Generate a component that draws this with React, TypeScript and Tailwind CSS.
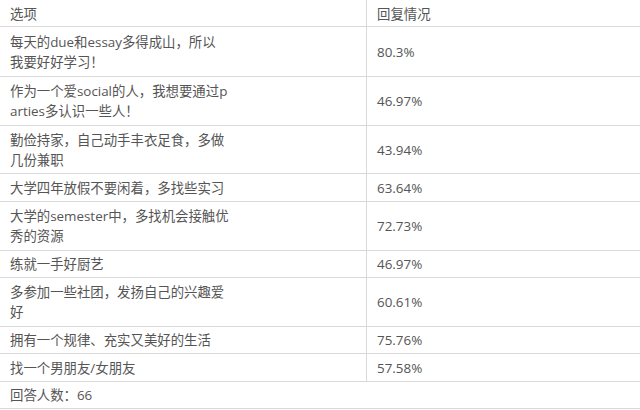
const rows = [
  { h: "h-[50px]", lines: ["每天的due和essay多得成山，所以", "我要好好学习！"], v: "80.3%" },
  { h: "h-[49px]", lines: ["作为一个爱social的人，我想要通过p", "arties多认识一些人！"], v: "46.97%" },
  { h: "h-[48px]", lines: ["勤俭持家，自己动手丰衣足食，多做", "几份兼职"], v: "43.94%" },
  { h: "h-[28px]", lines: ["大学四年放假不要闲着，多找些实习"], v: "63.64%" },
  { h: "h-[49px]", lines: ["大学的semester中，多找机会接触优", "秀的资源"], v: "72.73%" },
  { h: "h-[27px]", lines: ["练就一手好厨艺"], v: "46.97%" },
  { h: "h-[49px]", lines: ["多参加一些社团，发扬自己的兴趣爱", "好"], v: "60.61%" },
  { h: "h-[27px]", lines: ["拥有一个规律、充实又美好的生活"], v: "75.76%" },
  { h: "h-[28px]", lines: ["找一个男朋友/女朋友"], v: "57.58%" },
];

export default function App() {
  return (
    <div className="w-[640px] h-[410px] bg-white overflow-hidden text-[13.4px] leading-[20px] text-[#555555] font-['Open_Sans','Noto_Sans_CJK_SC',sans-serif]">
      {/* header */}
      <div className="grid grid-cols-[367px_1fr] h-[27px] border-b border-[#d9d9d9]">
        <div className="flex items-center pl-[10px] pt-px border-r border-[#d9d9d9]">选项</div>
        <div className="flex items-center pl-[10px] pt-px">回复情况</div>
      </div>

      {rows.map((r, i) => (
        <div key={i} className={`grid grid-cols-[367px_1fr] border-b border-[#d9d9d9] ${r.h}`}>
          <div className="flex flex-col justify-center pl-[10px] border-r border-[#d9d9d9]">
            {r.lines.map((l, j) => (
              <span key={j} className="block leading-[20px] whitespace-nowrap">{l}</span>
            ))}
          </div>
          <div className="flex items-center pl-[10px]">{r.v}</div>
        </div>
      ))}

      {/* footer */}
      <div className="flex items-center h-[27px] pl-[10px] border-b border-[#d9d9d9]">回答人数：66</div>
    </div>
  );
}
